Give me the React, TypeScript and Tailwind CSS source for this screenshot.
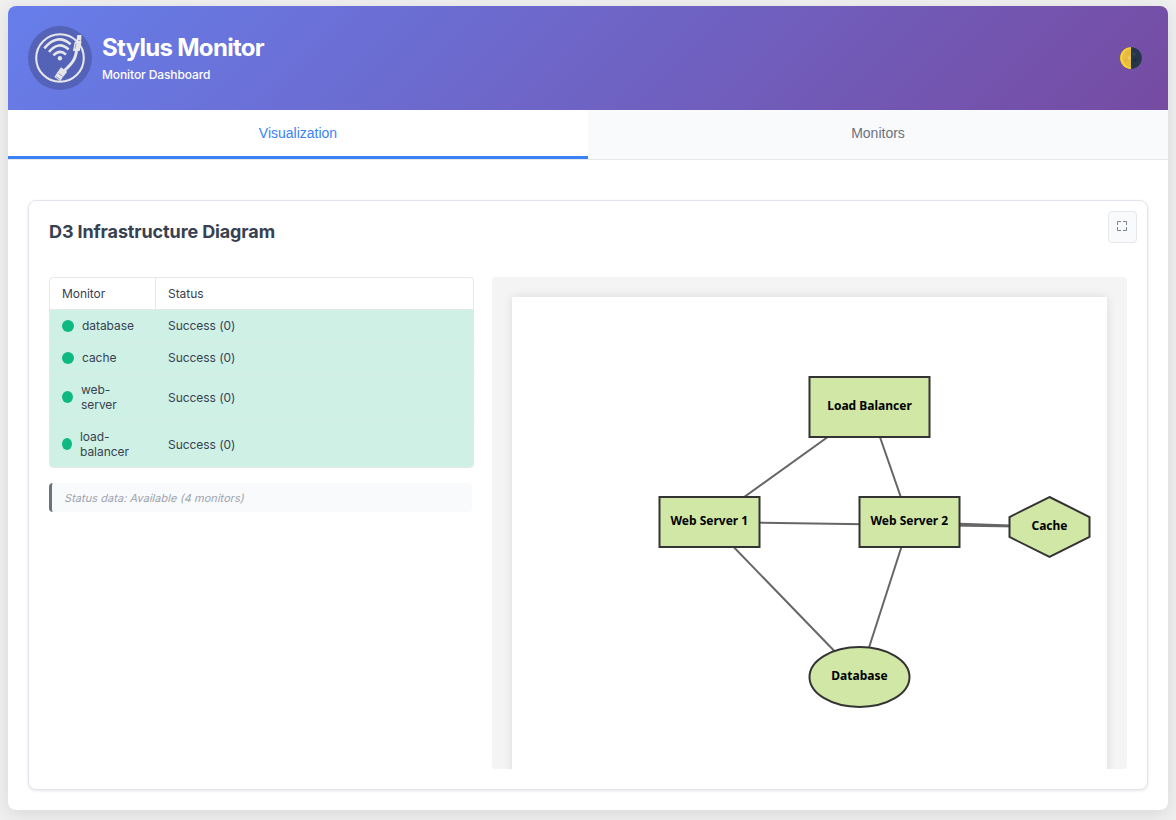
import React from "react";

type Row = { name: string; dot: string; gap: string; height: string };

const rows: Row[] = [
  { name: "database", dot: "w-3", gap: "gap-2", height: "h-8" },
  { name: "cache", dot: "w-3", gap: "gap-2", height: "h-8" },
  { name: "web-server", dot: "w-[11px]", gap: "gap-2", height: "h-[47px]" },
  { name: "load-balancer", dot: "w-[10px]", gap: "gap-2", height: "h-[46px]" },
];

function Logo() {
  return (
    <svg className="size-16 shrink-0" viewBox="0 0 64 64" fill="none">
      <circle cx="32" cy="32" r="32" fill="#5463b7" />
      <circle cx="32" cy="32" r="23.8" stroke="#e6e6e8" strokeWidth="2.1" />
      <g stroke="#e6e6e8" strokeWidth="2.6">
        <path d="M16.3 22.3 Q29.5 6.8 42.6 18.2" />
        <path d="M21 25.8 Q31 14.2 40.6 23.5" />
        <path d="M25.4 29.4 Q31.8 22.8 38 28.6" />
      </g>
      <circle cx="31.9" cy="32.2" r="2.2" fill="#e6e6e8" />
      <path d="M48.5 21 C48.5 33 43.5 38 36.5 45" stroke="#5463b7" strokeWidth="5.4" />
      <path d="M48.6 22 C48.6 33 43.5 38 36 45" stroke="#e6e6e8" strokeWidth="3" />
      <path d="M49.3 9 h4.2 l-.4 6.5 .4 .4 -1.8 9 h-6.8 l1.8-9 1.6-.5z" fill="#e6e6e8" />
      <path d="M48.2 17.5l-1.2 5M50.2 14.5h2" stroke="#7b86c4" strokeWidth=".7" />
      <path d="M33 41.2 l6.2 4.6 -5 6.2 -1.8 3.2 -6-4.2 2-3.2z" fill="#e6e6e8" />
      <path d="M30.5 47.5l4 2.8M28 50.7l4.2 2.8" stroke="#7b86c4" strokeWidth=".8" />
    </svg>
  );
}

function Moon() {
  return (
    <svg className="size-[22px]" viewBox="0 0 22 22">
      <circle cx="11" cy="11" r="10.8" fill="#26364a" />
      <path d="M11 .2a10.8 10.8 0 0 0 0 21.6z" fill="#e8bd42" />
      <path d="M11 .2a10.8 10.8 0 0 0 0 21.6v-1.4a10 10 0 0 1-7-15A10 10 0 0 1 11 1.6z" fill="#f8d22e" />
      <circle cx="8" cy="6" r="1.4" fill="#e3b044" />
      <circle cx="9.2" cy="11" r="1.4" fill="#f0cf6a" />
      <circle cx="6" cy="13" r="1.2" fill="#dcae45" />
      <circle cx="14" cy="7" r="1.8" fill="#2f4156" />
      <circle cx="15" cy="13" r="1.8" fill="#1e2c40" />
    </svg>
  );
}

function Diagram() {
  return (
    <svg width="595" height="472" viewBox="0 0 595 472" className="block">
      <g stroke="#666" strokeWidth="2">
        <path d="M357.5 110L197.5 225M357.5 110L397.5 225" />
        <path d="M197.5 225L347.5 380" />
        <path d="M397.5 225L347.5 380" />
        <path d="M197.5 225L537.5 230" />
        <path d="M397.5 225L537.5 230" />
      </g>
      <g fill="#d0e7a6" stroke="#333" strokeWidth="2">
        <rect x="297.5" y="80" width="120" height="60" />
        <rect x="147.5" y="200" width="100" height="50" />
        <rect x="347.5" y="200" width="100" height="50" />
        <ellipse cx="347.5" cy="380" rx="50" ry="30" />
        <polygon points="537.5,200 577.5,220 577.5,240 537.5,260 497.5,240 497.5,220" />
      </g>
      <g className="font-['Noto_Sans',sans-serif] text-[12px] font-bold" textAnchor="middle" fill="#000">
        <text x="357.5" y="113">Load Balancer</text>
        <text x="197.3" y="228">Web Server 1</text>
        <text x="397.3" y="228">Web Server 2</text>
        <text x="537.5" y="233">Cache</text>
        <text x="347.5" y="383">Database</text>
      </g>
    </svg>
  );
}

export default function App() {
  return (
    <div className="h-[820px] overflow-hidden bg-[#f0f0f0] px-2 pt-1.5 font-['Inter',sans-serif] text-[#374151]">
      <div className="flex h-[804px] flex-col overflow-hidden rounded-lg bg-white shadow-[0_4px_20px_rgba(0,0,0,0.1)]">
        <header className="flex h-[104px] shrink-0 items-center bg-[linear-gradient(135deg,#667eea_0%,#764ba2_100%)] px-5 text-white">
          <Logo />
          <div className="ml-[10px] flex flex-1 flex-col pb-[2px]">
            <h1 className="text-[24px] leading-[29px] font-bold tracking-[-0.7px]">Stylus Monitor</h1>
            <p className="mt-[5px] text-[12px] leading-[15px] font-medium tracking-[-0.1px]">Monitor Dashboard</p>
          </div>
          <button className="mr-[6px]" aria-label="Theme">
            <Moon />
          </button>
        </header>

        <nav className="flex h-[50px] shrink-0 border-b border-[#e5e7eb] font-['Liberation_Sans',sans-serif] text-[14px] leading-4">
          <button className="flex-1 border-b-[3px] border-[#3b82f6] bg-white text-[#3b82f6]">Visualization</button>
          <button className="flex-1 border-b-[3px] border-transparent bg-[#f8fafc] text-[#6b7280]">Monitors</button>
        </nav>

        <main className="flex flex-1 px-5 pt-10 pb-5">
          <section className="flex flex-1 flex-col rounded-lg border border-[#e1e5eb] bg-white px-5 pt-[10px] pb-5 shadow-[0_1px_3px_rgba(0,0,0,0.1)]">
            <div className="-mr-[10px] flex h-[66px] items-start justify-between">
              <h2 className="mt-[10px] text-[18px] leading-[22px] font-bold tracking-[-0.12px]">D3 Infrastructure Diagram</h2>
              <button
                className="flex h-8 w-[29px] items-center justify-center rounded border border-[#e5e7eb] bg-[#f8fafc] pr-px pb-[2px]"
                aria-label="Fullscreen"
              >
                <svg className="size-[10px]" viewBox="0 0 10 10" fill="none" stroke="#7d8492">
                  <path d="M.5 4V.5H4M6 .5h3.5V4M9.5 6v3.5H6M4 9.5H.5V6" />
                </svg>
              </button>
            </div>

            <div className="flex flex-1 gap-[18px]">
              <div className="w-[425px]">
                <div className="overflow-hidden rounded border border-[#e5e7eb] text-[12px] leading-[15px] tracking-[-0.05px]">
                  <div className="flex h-8 items-center border-b border-[#e5e7eb]">
                    <div className="flex h-full w-[106px] items-center border-r border-[#e5e7eb] px-3">Monitor</div>
                    <div className="px-3">Status</div>
                  </div>
                  {rows.map((row, i) => (
                    <div
                      key={row.name}
                      className={`flex items-center bg-[#cff1e5] ${row.height} ${i < 3 ? "border-b border-[#d5ebe3]" : ""}`}
                    >
                      <div className={`flex h-full w-[106px] items-center border-r border-[#d5ebe3] px-3 ${row.gap}`}>
                        <span className={`h-3 shrink-0 rounded-[50%] bg-[#10b981] ${row.dot}`} />
                        <span>{row.name}</span>
                      </div>
                      <div className="px-3">Success (0)</div>
                    </div>
                  ))}
                </div>
                <div className="mt-[15px] mr-[2px] flex h-[29px] items-center rounded border-l-[3px] border-[#6b7280] bg-[#f9fafb] pt-px pl-[13px] text-[11px] text-[#9ca3af]">
                  <span className="-skew-x-[14deg] tracking-[0.05px]">Status data: Available (4 monitors)</span>
                </div>
              </div>
              <div className="h-[492px] w-[635px] overflow-hidden rounded bg-[#f4f4f4] px-5 pt-5">
                <div className="h-[500px] bg-white shadow-[0_0_10px_rgba(0,0,0,0.1)]">
                  <Diagram />
                </div>
              </div>
            </div>
          </section>
        </main>
      </div>
    </div>
  );
}
